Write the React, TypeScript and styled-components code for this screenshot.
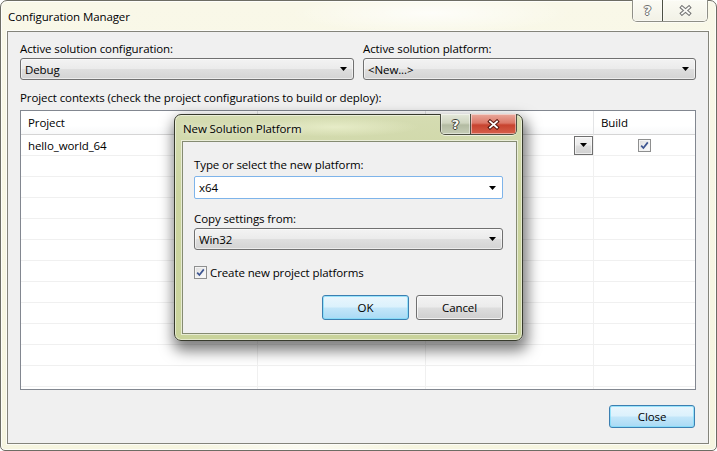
import React from 'react'
import styled, { createGlobalStyle } from 'styled-components'

const GlobalStyle = createGlobalStyle`
  html, body {
    margin: 0;
    padding: 0;
    background: #ffffff;
  }
  body {
    font-family: 'Segoe UI', 'Open Sans', 'Noto Sans', sans-serif;
    font-size: 11.5px;
    letter-spacing: -0.1px;
    color: #000;
  }
`

const Arrow = () => (
  <svg width="7" height="4" viewBox="0 0 7 4">
    <polygon points="0,0 7,0 3.5,4" fill="#000" />
  </svg>
)

const CloseGlyph = ({ fill, edge }: { fill: string; edge: string }) => (
  <svg width="13" height="11" viewBox="0 0 13 11">
    <path d="M3 2.5 L10 8.5 M10 2.5 L3 8.5" stroke={edge} strokeWidth="3.8" strokeLinecap="square" />
    <path d="M3 2.5 L10 8.5 M10 2.5 L3 8.5" stroke={fill} strokeWidth="1.7" strokeLinecap="square" />
  </svg>
)

const Check = () => (
  <svg width="9" height="9" viewBox="0 0 9 9">
    <path d="M1.2 4.6 L3.4 7 L7.8 1.4" stroke="#3d5591" strokeWidth="1.7" fill="none" />
  </svg>
)

const rows = Array.from({ length: 13 }, (_, i) => i)

export default function App() {
  return (
    <Screen>
      <GlobalStyle />
      <Window>
        <TitleBar>
          <Title>Configuration Manager</Title>
          <CaptionGroup $height={21}>
            <CaptionButton $width={29} $kind="plain">
              <HelpGlyph $edge="#6f6f6f">?</HelpGlyph>
            </CaptionButton>
            <CaptionButton $width={45} $kind="plain">
              <CloseGlyph fill="#fbfbf7" edge="#757575" />
            </CaptionButton>
          </CaptionGroup>
        </TitleBar>
        <Client>
          <FieldRow>
            <Field>
              <Label>Active solution configuration:</Label>
              <Combo $height={22}>
                <ComboText>Debug</ComboText>
                <Arrow />
              </Combo>
            </Field>
            <Field>
              <Label>Active solution platform:</Label>
              <Combo $height={22}>
                <ComboText>&lt;New...&gt;</ComboText>
                <Arrow />
              </Combo>
            </Field>
          </FieldRow>
          <ContextLabel>Project contexts (check the project configurations to build or deploy):</ContextLabel>
          <Table>
            {/* the Configuration and Platform headings sit under the dialog */}
            <Row $header>
              <Cell $header>Project</Cell>
              <Cell $header />
              <Cell $header />
              <Cell $header>Build</Cell>
            </Row>
            {rows.map(i => (
              <Row key={i}>
                <Cell>{i === 0 ? 'hello_world_64' : ''}</Cell>
                <Cell />
                <Cell $align="flex-end" $flush>
                  {i === 0 && (
                    <CellDrop>
                      <Arrow />
                    </CellDrop>
                  )}
                </Cell>
                <Cell $align="center">
                  {i === 0 && (
                    <CheckBox>
                      <Check />
                    </CheckBox>
                  )}
                </Cell>
              </Row>
            ))}
          </Table>
          <ButtonRow>
            <Button $default $width={86} $height={23}>
              Close
            </Button>
          </ButtonRow>
        </Client>
      </Window>

      <Dialog>
        <TitleBar $dialog>
          <Title $dialog>New Solution Platform</Title>
          <CaptionGroup $height={20} $dialog>
            <CaptionButton $width={29} $kind="help">
              <HelpGlyph $edge="#3d3f36">?</HelpGlyph>
            </CaptionButton>
            <CaptionButton $width={46} $kind="close">
              <CloseGlyph fill="#ffffff" edge="#5b1a12" />
            </CaptionButton>
          </CaptionGroup>
        </TitleBar>
        <DialogClient>
          <Label>Type or select the new platform:</Label>
          <Combo $height={23} $editable $gap={4}>
            <ComboText>x64</ComboText>
            <Arrow />
          </Combo>
          <Label $gap={12}>Copy settings from:</Label>
          <Combo $height={22} $gap={2}>
            <ComboText>Win32</ComboText>
            <Arrow />
          </Combo>
          <CheckRow>
            <CheckBox>
              <Check />
            </CheckBox>
            <span>Create new project platforms</span>
          </CheckRow>
          <ButtonRow $gap={15}>
            <Button $default $width={87} $height={25}>
              OK
            </Button>
            <Button $width={87} $height={25}>
              Cancel
            </Button>
          </ButtonRow>
        </DialogClient>
      </Dialog>
    </Screen>
  )
}

const Screen = styled.div`
  position: relative;
  width: 717px;
  height: 451px;
`

const Window = styled.div`
  box-sizing: border-box;
  width: 717px;
  height: 451px;
  display: flex;
  flex-direction: column;
  border: 1px solid #6d6d64;
  border-radius: 7px 7px 5px 5px;
  background:
    radial-gradient(ellipse 200px 30px at 430px 12px, rgba(255, 255, 255, 0.75), rgba(255, 255, 255, 0) 70%),
    radial-gradient(ellipse 160px 20px at 300px 446px, rgba(255, 255, 255, 0.6), rgba(255, 255, 255, 0) 70%),
    linear-gradient(180deg, #f9f8e8 0%, #f6f5e0 100%);
  box-shadow: inset 0 0 0 1px rgba(255, 255, 255, 0.8);
`

const TitleBar = styled.div<{ $dialog?: boolean }>`
  display: flex;
  align-items: flex-start;
  flex-shrink: 0;
  height: ${p => (p.$dialog ? 26 : 30)}px;
`

const Title = styled.div<{ $dialog?: boolean }>`
  flex: 1;
  padding: ${p => (p.$dialog ? '6px 0 0 8px' : '8px 0 0 7px')};
  line-height: 15px;
  color: #000;
  text-shadow: 0 0 6px rgba(255, 255, 255, 0.9);
`

const CaptionGroup = styled.div<{ $height: number; $dialog?: boolean }>`
  display: flex;
  height: ${p => p.$height}px;
  margin: -1px ${p => (p.$dialog ? 5 : 8)}px 0 0;
  border: 1px solid ${p => (p.$dialog ? '#4c4f43' : '#8f8f87')};
  border-top: none;
  border-radius: 0 0 5px 5px;
  overflow: hidden;
  box-shadow: 0 1px 0 rgba(255, 255, 255, 0.6);
`

const CaptionButton = styled.div<{ $width: number; $kind: 'plain' | 'help' | 'close' }>`
  box-sizing: border-box;
  width: ${p => p.$width}px;
  display: flex;
  align-items: center;
  justify-content: center;
  & + & {
    border-left: 1px solid ${p => (p.$kind === 'plain' ? '#a9a9a1' : '#4c4f43')};
  }
  background: ${p =>
    p.$kind === 'close'
      ? 'linear-gradient(180deg, #e9a99c 0%, #dc7868 45%, #c7432f 55%, #d6604a 100%)'
      : p.$kind === 'help'
      ? 'linear-gradient(180deg, #e4e8da 0%, #cfd5c0 45%, #b3bba2 55%, #c6cdb6 100%)'
      : 'linear-gradient(180deg, #fbfbf4 0%, #f2f1e6 100%)'};
  box-shadow: inset 0 0 0 1px rgba(255, 255, 255, 0.45);
`

const HelpGlyph = styled.span<{ $edge: string }>`
  font-family: 'DejaVu Sans', sans-serif;
  font-weight: bold;
  font-size: 13px;
  line-height: 13px;
  letter-spacing: 0;
  color: #fbfbf7;
  text-shadow:
    1px 0 0 ${p => p.$edge},
    -1px 0 0 ${p => p.$edge},
    0 1px 0 ${p => p.$edge},
    0 -1px 0 ${p => p.$edge};
`

const Client = styled.div`
  flex: 1;
  display: flex;
  flex-direction: column;
  margin: 0 7px 6px 6px;
  padding: 9px 12px 0 12px;
  border: 1px solid #84847b;
  background: #f0f0f0;
  box-shadow: 0 0 0 1px rgba(255, 255, 255, 0.7);
`

const FieldRow = styled.div`
  display: grid;
  grid-template-columns: 334px 333px;
  column-gap: 9px;
`

const Field = styled.div`
  display: flex;
  flex-direction: column;
`

const Label = styled.div<{ $gap?: number }>`
  line-height: 15px;
  margin-top: ${p => p.$gap ?? 0}px;
`

const ContextLabel = styled.div`
  line-height: 15px;
  margin-top: 10px;
`

const Combo = styled.div<{ $height: number; $editable?: boolean; $gap?: number }>`
  box-sizing: border-box;
  height: ${p => p.$height}px;
  margin-top: ${p => p.$gap ?? 2}px;
  display: flex;
  align-items: center;
  padding: 0 6px 0 4px;
  border: 1px solid ${p => (p.$editable ? '#7eb4ea' : '#707070')};
  border-radius: ${p => (p.$editable ? 2 : 3)}px;
  background: ${p =>
    p.$editable ? '#ffffff' : 'linear-gradient(180deg, #f3f3f3 0%, #ebebeb 48%, #dedede 52%, #d3d3d3 100%)'};
  box-shadow: ${p => (p.$editable ? 'none' : 'inset 0 0 0 1px rgba(255,255,255,0.55)')};
`

const ComboText = styled.span`
  flex: 1;
  line-height: 15px;
`

const Table = styled.div`
  box-sizing: border-box;
  height: 280px;
  margin-top: 5px;
  border: 1px solid #828790;
  background: #ffffff;
  overflow: hidden;
`

const Row = styled.div<{ $header?: boolean }>`
  display: grid;
  grid-template-columns: 237px 168px 168px 101px;
  height: ${p => (p.$header ? 24 : 21)}px;
  background: ${p => (p.$header ? 'linear-gradient(180deg, #ffffff 0%, #ffffff 60%, #f7f8f9 100%)' : '#ffffff')};
`

const Cell = styled.div<{ $header?: boolean; $align?: string; $flush?: boolean }>`
  box-sizing: border-box;
  display: flex;
  align-items: center;
  justify-content: ${p => p.$align ?? 'flex-start'};
  padding: ${p => (p.$flush ? '0 0 0 7px' : '0 7px')};
  border-right: 1px solid ${p => (p.$header ? '#e3e4e6' : '#f0f0f0')};
  border-bottom: 1px solid ${p => (p.$header ? '#d5d5d5' : '#f0f0f0')};
  line-height: 15px;
  white-space: nowrap;
  &:last-child {
    border-right: none;
  }
`

const CellDrop = styled.div`
  box-sizing: border-box;
  width: 19px;
  height: 19px;
  display: flex;
  align-items: center;
  justify-content: center;
  border: 1px solid #6f6f6f;
  background: linear-gradient(180deg, #f3f3f3 0%, #ebebeb 48%, #dddddd 52%, #d0d0d0 100%);
  box-shadow: inset 0 0 0 1px rgba(255, 255, 255, 0.6);
`

const CheckBox = styled.div`
  box-sizing: border-box;
  width: 13px;
  height: 13px;
  flex-shrink: 0;
  display: flex;
  align-items: center;
  justify-content: center;
  border: 1px solid #8e8f8f;
  background: linear-gradient(135deg, #dcdcdc 0%, #f0f0f0 55%, #fcfcfc 100%);
  box-shadow: inset 0 0 0 1px #f4f4f4;
`

const CheckRow = styled.div`
  display: flex;
  align-items: center;
  gap: 3px;
  margin-top: 15px;
  line-height: 15px;
`

const ButtonRow = styled.div<{ $gap?: number }>`
  display: flex;
  justify-content: flex-end;
  gap: 7px;
  margin-top: ${p => p.$gap ?? 15}px;
  padding-right: ${p => (p.$gap ? 0 : 1)}px;
`

const Button = styled.div<{ $default?: boolean; $width: number; $height: number }>`
  box-sizing: border-box;
  width: ${p => p.$width}px;
  height: ${p => p.$height}px;
  display: flex;
  align-items: center;
  justify-content: center;
  border: 1px solid ${p => (p.$default ? '#3c7fb1' : '#707070')};
  border-radius: 3px;
  background: ${p =>
    p.$default
      ? 'linear-gradient(180deg, #e9f6fd 0%, #dbf1fc 48%, #c3e6f9 52%, #a9daf5 100%)'
      : 'linear-gradient(180deg, #f3f3f3 0%, #ebebeb 48%, #dddddd 52%, #cfcfcf 100%)'};
  box-shadow: inset 0 0 0 1px ${p => (p.$default ? 'rgba(120, 220, 250, 0.7)' : 'rgba(255, 255, 255, 0.7)')};
  line-height: 15px;
`

const Dialog = styled.div`
  position: absolute;
  left: 174px;
  top: 114px;
  width: 349px;
  height: 227px;
  box-sizing: border-box;
  display: flex;
  flex-direction: column;
  border: 1px solid #373a2d;
  border-radius: 7px;
  background:
    radial-gradient(ellipse 120px 14px at 160px 12px, rgba(235, 240, 205, 0.8), rgba(235, 240, 205, 0) 70%),
    linear-gradient(180deg, #d5dcb2 0%, #cbd49f 35%, #c9d39b 100%);
  box-shadow:
    2px 7px 14px 3px rgba(0, 0, 0, 0.5),
    inset 0 0 0 1px rgba(255, 255, 255, 0.5);
`

const DialogClient = styled.div`
  flex: 1;
  display: flex;
  flex-direction: column;
  margin: 0 5px 6px 7px;
  padding: 15px 13px 0 11px;
  border: 1px solid #858b72;
  background: #f0f0f0;
  box-shadow: 0 0 0 1px rgba(255, 255, 255, 0.55);
`
